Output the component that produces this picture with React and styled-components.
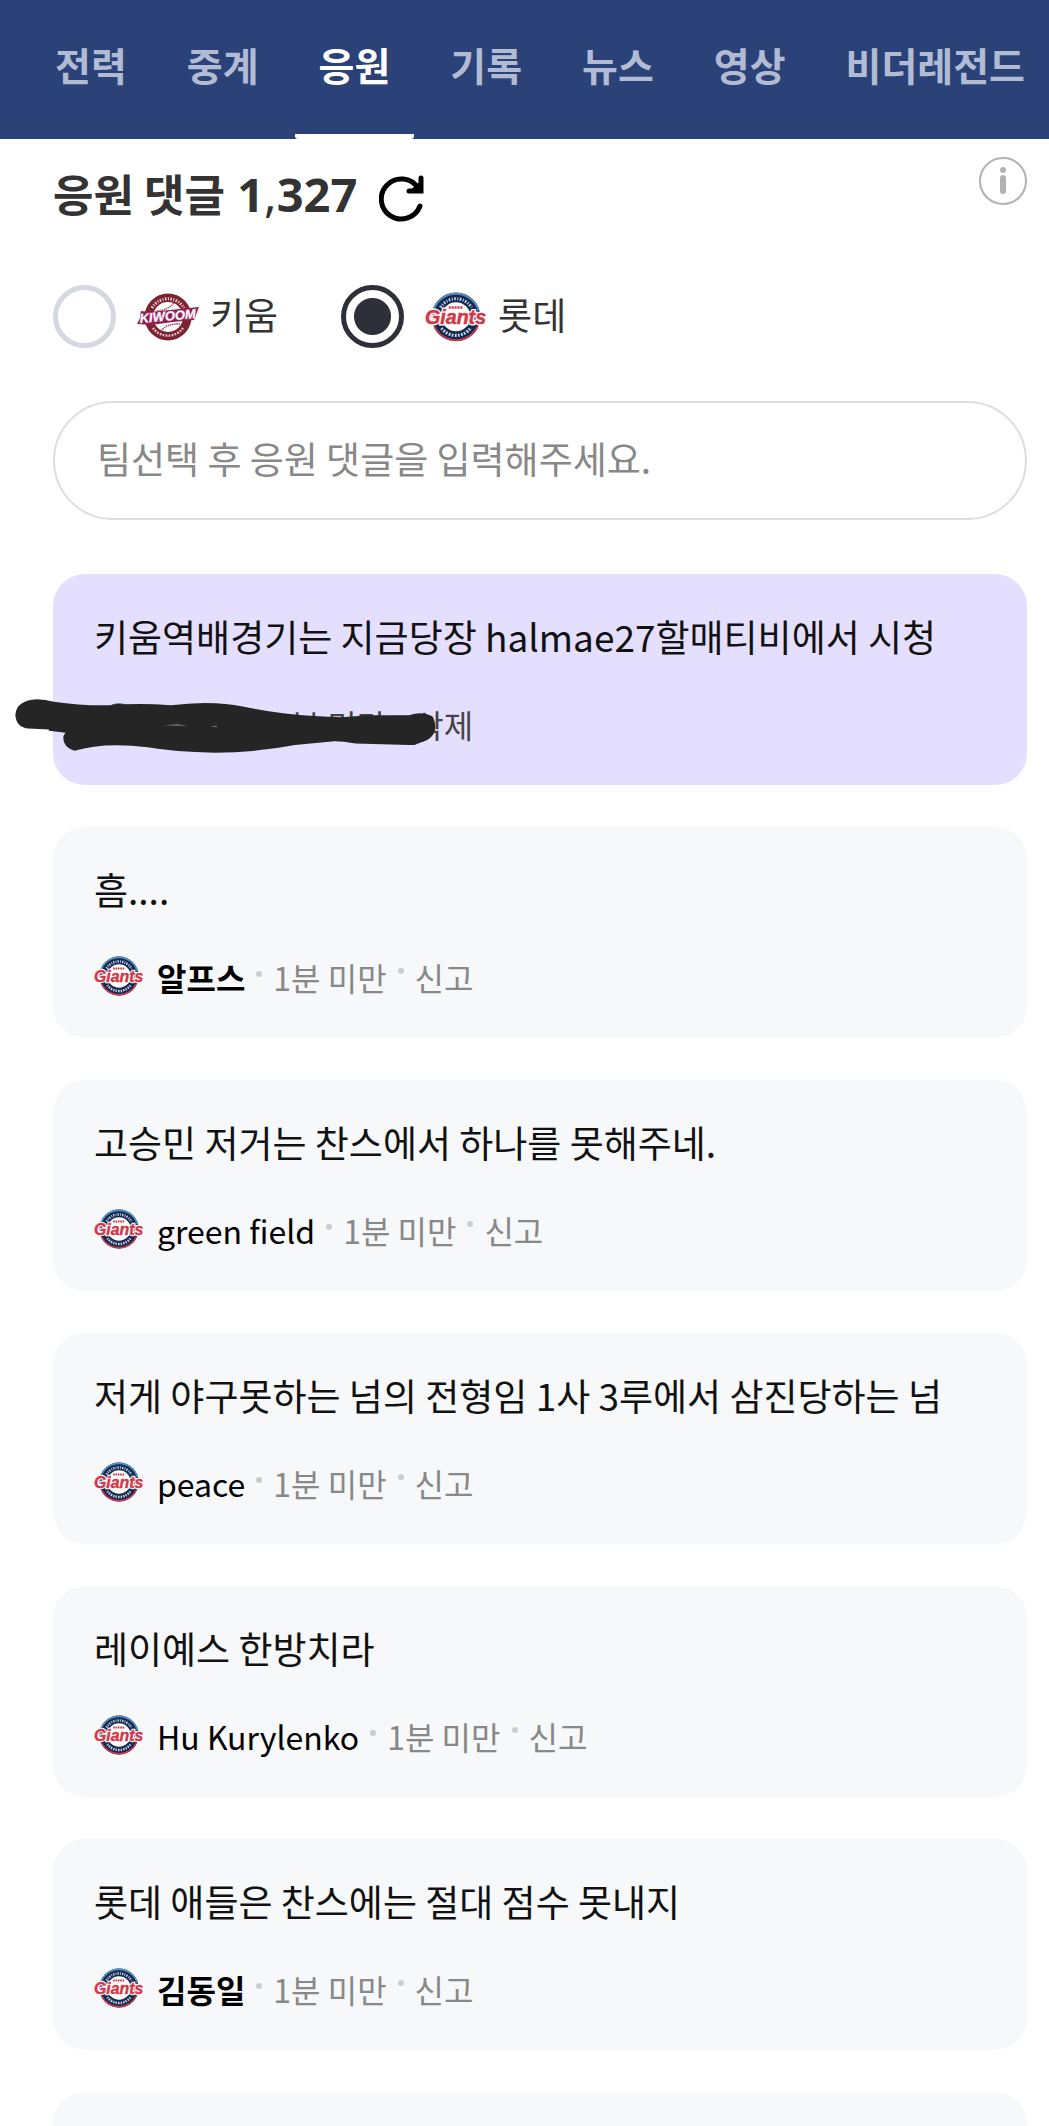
import React, { useState } from "react";
import styled, { createGlobalStyle } from "styled-components";

const tabs = ["전력", "중계", "응원", "기록", "뉴스", "영상", "비더레전드"];

const comments = [
    { id: 1, text: "키움역배경기는 지금당장 halmae27할매티비에서 시청", mine: true },
    { id: 2, text: "흠....", name: "알프스", bold: true },
    { id: 3, text: "고승민 저거는 찬스에서 하나를 못해주네.", name: "green field" },
    { id: 4, text: "저게 야구못하는 넘의 전형임 1사 3루에서 삼진당하는 넘", name: "peace" },
    { id: 5, text: "레이예스 한방치라", name: "Hu Kurylenko" },
    { id: 6, text: "롯데 애들은 찬스에는 절대 점수 못내지", name: "김동일", bold: true },
];

function GiantsLogo({ width }) {
    return (
        <Logo viewBox="0 0 60 48" width={width} aria-hidden="true">
            <circle cx="30" cy="24" r="23.5" fill="#14284f" />
            <path d="M8 18a23 23 0 0 1 44 0" fill="none" stroke="#4d8fc4" strokeWidth="2" />
            <path d="M9 33a23 23 0 0 0 42 0" fill="none" stroke="#c0394d" strokeWidth="2" />
            <circle cx="30" cy="24" r="14" fill="#fff" />
            <path d="M15 15a17.5 17.5 0 0 1 30 0" fill="none" stroke="#c9d5e6" strokeWidth="3" strokeDasharray="1.6 1.4 1 1.4" />
            <path d="M16 35a17.5 17.5 0 0 0 28 0" fill="none" stroke="#c9d5e6" strokeWidth="3" strokeDasharray="1.6 1.4 1.8 1.2" />
            <path d="M23 15h14" stroke="#d0374a" strokeWidth="2.4" strokeDasharray="2 .8" />
            <WordMark x="0" y="31" fontSize="19" fill="none" stroke="#fff" strokeWidth="3">Giants</WordMark>
            <WordMark x="0" y="31" fontSize="19" fill="#d3374a" stroke="#d3374a" strokeWidth=".5">Giants</WordMark>
        </Logo>
    );
}

function KiwoomLogo() {
    return (
        <Logo viewBox="0 0 62 48" width="62" aria-hidden="true">
            <circle cx="31" cy="24" r="23.5" fill="#7b2430" />
            <circle cx="31" cy="24" r="15" fill="#fff" />
            <path d="M15 15a18.5 18.5 0 0 1 32 0" fill="none" stroke="#e8cfd2" strokeWidth="3" strokeDasharray="1.6 1.4 1 1.4" />
            <path d="M16 35a18.5 18.5 0 0 0 30 0" fill="none" stroke="#e8cfd2" strokeWidth="2.4" strokeDasharray="1.6 1.4 1.8 1.2" />
            <path d="M20 18q11-1 17-8M24 38q6-8 20-7" fill="none" stroke="#a04a50" strokeWidth="1.6" strokeDasharray="1.4 .8" />
            <path d="M4 18L13 19L62 14L57 27L36 29L14 32L0 31L3 25Z" fill="#8a2450" />
            <WordMark x="3" y="30" fontSize="13" fill="#fff" stroke="#c25c90" strokeWidth="1" transform="rotate(-5 3 30)">KIWOOM</WordMark>
        </Logo>
    );
}

function Scribble() {
    return (
        <ScribbleSvg viewBox="44 414 1257 163" preserveAspectRatio="none" aria-hidden="true">
            <path
                fill="#252525"
                d="M45 462Q48 418 110 415Q135 416 160 422Q220 430 270 433L330 433Q345 427 370 430Q440 427 510 433Q560 427 610 426Q680 427 720 436Q790 450 850 458Q940 468 1020 469L1100 463L1220 463Q1260 450 1290 466Q1299 480 1299 500Q1296 535 1255 545Q1240 554 1220 553L1060 548Q1020 541 990 542L880 553Q760 576 640 576Q520 574 440 560Q350 549 280 558Q250 562 222 570Q188 560 188 530Q189 522 195 516L145 510L145 506L85 503Q48 500 45 462Z"
            />
            <path d="M484 493L530 490L560 495L530 495ZM628 497L646 495L648 499Z" fill="#77757f" />
        </ScribbleSvg>
    );
}

function CommentCard({ comment }) {
    return (
        <Card $mine={comment.mine}>
            <Text>{comment.text}</Text>
            <Meta $mine={comment.mine}>
                <MetaLogo>
                    <GiantsLogo width="50" />
                </MetaLogo>
                {comment.mine ? <HiddenName /> : <Name $bold={comment.bold}>{comment.name}</Name>}
                <Dot />
                <span>1분 미만</span>
                <Dot $raised />
                <Action type="button">{comment.mine ? "삭제" : "신고"}</Action>
            </Meta>
            {comment.mine ? <Scribble /> : null}
        </Card>
    );
}

function App() {
    const [tab, setTab] = useState("응원");
    const [team, setTeam] = useState("lotte");

    return (
        <Page>
            <GlobalStyle />
            <Nav>
                {tabs.map((name) => (
                    <Tab key={name} type="button" $active={name === tab} onClick={() => setTab(name)}>
                        {name}
                    </Tab>
                ))}
            </Nav>
            <Main>
                <Head>
                    <Title>
                        응원 댓글<Count> 1<Comma>,</Comma>327</Count>
                    </Title>
                    <IconButton type="button" aria-label="새로고침">
                        <svg width="46" height="48" viewBox="0 0 46 48" fill="none" stroke="#000" strokeWidth="5" strokeLinecap="round">
                            <path d="M41 32A20 20 0 1 1 39 14" />
                            <path d="M42 4V17H30" strokeLinejoin="miter" />
                            <path d="M34 15L41 9V16Z" fill="#000" strokeWidth="2" />
                        </svg>
                    </IconButton>
                    <InfoButton type="button" aria-label="안내">
                        <svg width="48" height="48" viewBox="0 0 48 48">
                            <circle cx="24" cy="24" r="23" fill="none" stroke="#b2b2b2" strokeWidth="2" />
                            <circle cx="24" cy="13" r="3" fill="#b2b2b2" />
                            <rect x="21" y="18" width="6" height="19" rx="3" fill="#b2b2b2" />
                        </svg>
                    </InfoButton>
                </Head>
                <Teams>
                    <TeamLabel>
                        <Radio name="team" checked={team === "kiwoom"} onChange={() => setTeam("kiwoom")} />
                        <KiwoomLogo />
                        <TeamName>키움</TeamName>
                    </TeamLabel>
                    <TeamLabel>
                        <Radio name="team" checked={team === "lotte"} onChange={() => setTeam("lotte")} />
                        <GiantsLogo width="62" />
                        <TeamName>롯데</TeamName>
                    </TeamLabel>
                </Teams>
                <CommentInput aria-label="응원 댓글" placeholder="팀선택 후 응원 댓글을 입력해주세요." />
                <List>
                    {comments.map((comment) => (
                        <CommentCard key={comment.id} comment={comment} />
                    ))}
                    <Card />
                </List>
            </Main>
        </Page>
    );
}

const GlobalStyle = createGlobalStyle`
  * {
    box-sizing: border-box;
  }
  body {
    margin: 0;
    background: #fff;
  }
  body, button, input {
    font-family: "Noto Sans CJK KR", sans-serif;
  }
  button {
    padding: 0;
    border: 0;
    background: none;
    cursor: pointer;
  }
`;

const Page = styled.div`
  height: 100vh;
  overflow: hidden;
`;

const Nav = styled.nav`
  display: flex;
  gap: 12px;
  height: 139px;
  padding-left: 31px;
  overflow: hidden;
  background: #2b4278;
`;

const Tab = styled.button`
  flex: none;
  padding: 0 24px 6px;
  border-bottom: 5px solid ${({ $active }) => ($active ? "#fff" : "transparent")};
  border-radius: 3px;
  color: ${({ $active }) => ($active ? "#fff" : "#b1bbd3")};
  font-size: 39px;
  font-weight: 700;
`;

const Main = styled.main`
  padding: 18px 22px 0 53px;
`;

const Head = styled.header`
  display: flex;
  align-items: flex-start;
  height: 70px;
`;

const Title = styled.h1`
  margin: 6px 22px 0 0;
  color: #333;
  font-size: 44px;
  font-weight: 700;
  line-height: 60px;
`;

const Count = styled.span`
  font-family: "Noto Sans", sans-serif;
  font-size: 47px;
  line-height: 40px;
`;

const Comma = styled.span`
  font-weight: 400;
`;

const IconButton = styled.button`
  margin-top: 17px;
  svg {
    display: block;
  }
`;

const InfoButton = styled(IconButton)`
  margin: 0 0 0 auto;
`;

const Teams = styled.div`
  display: flex;
  gap: 63px;
  margin-top: 58px;
`;

const TeamLabel = styled.label`
  display: flex;
  align-items: center;
  gap: 11px;
  height: 63px;
  color: #333;
  font-size: 37px;
`;

const TeamName = styled.span`
  padding-bottom: 6px;
`;

const Radio = styled.input.attrs({ type: "radio" })`
  appearance: none;
  width: 63px;
  height: 63px;
  margin: 0 10px 0 0;
  border: 5px solid #d5d8e0;
  border-radius: 50%;
  &:checked {
    border-color: #2d3038;
    background: radial-gradient(circle, #2d3038 18px, #fff 19px);
  }
`;

const CommentInput = styled.input`
  display: block;
  width: 100%;
  height: 119px;
  margin-top: 53px;
  padding: 0 42px 6px;
  border: 2px solid #ddd;
  border-radius: 60px;
  font-size: 37px;
  &::placeholder {
    color: #888;
    opacity: 1;
  }
`;

const List = styled.ul`
  display: flex;
  flex-direction: column;
  gap: 42px;
  margin: 54px 0 0;
  padding: 0;
  list-style: none;
`;

const Card = styled.li`
  position: relative;
  min-height: 211px;
  padding: 35px 41px 37px;
  border-radius: 32px;
  background: ${({ $mine }) => ($mine ? "#e4dffe" : "#f7f8fa")};
`;

const Text = styled.p`
  margin: 0 0 37px;
  color: #111;
  font-size: 37px;
  line-height: 54px;
`;

const Meta = styled.div`
  display: flex;
  align-items: center;
  gap: 11px;
  color: ${({ $mine }) => ($mine ? "#444" : "#888")};
  font-size: 32px;
  line-height: 48px;
`;

const MetaLogo = styled.span`
  display: flex;
  padding-bottom: 2px;
`;

const Name = styled.span`
  margin-left: 2px;
  color: #000;
  font-weight: ${({ $bold }) => ($bold ? 700 : 400)};
`;

const HiddenName = styled.span`
  width: 88px;
  margin-left: 2px;
`;

const Dot = styled.i`
  width: 6px;
  height: 6px;
  margin-bottom: ${({ $raised }) => ($raised ? "12px" : "6px")};
  border-radius: 50%;
  background: #ccc;
`;

const Action = styled.button`
  color: inherit;
  font-size: 32px;
  line-height: 48px;
`;

const Logo = styled.svg`
  flex: none;
  overflow: visible;
`;

const WordMark = styled.text`
  font-family: "Liberation Sans", sans-serif;
  font-style: italic;
  font-weight: 700;
  paint-order: stroke;
`;

const ScribbleSvg = styled.svg`
  position: absolute;
  top: 125px;
  left: -38px;
  width: 421px;
  height: 54px;
`;

export default App;
